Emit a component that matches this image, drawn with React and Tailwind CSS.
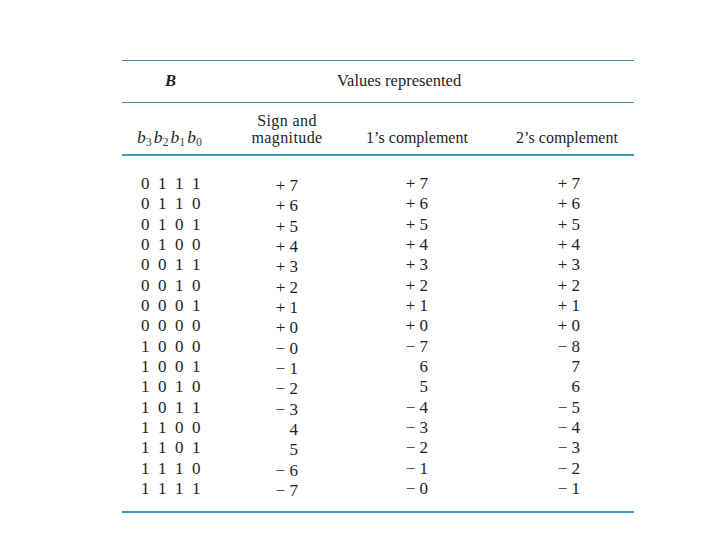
import React from 'react';

// rows: bits, sign-magnitude, 1's complement, 2's complement
const rows = [
    ['0111', '+ 7', '+ 7', '+ 7'],
    ['0110', '+ 6', '+ 6', '+ 6'],
    ['0101', '+ 5', '+ 5', '+ 5'],
    ['0100', '+ 4', '+ 4', '+ 4'],
    ['0011', '+ 3', '+ 3', '+ 3'],
    ['0010', '+ 2', '+ 2', '+ 2'],
    ['0001', '+ 1', '+ 1', '+ 1'],
    ['0000', '+ 0', '+ 0', '+ 0'],
    ['1000', '\u2212 0', '\u2212 7', '\u2212 8'],
    ['1001', '\u2212 1', '6', '7'],
    ['1010', '\u2212 2', '5', '6'],
    ['1011', '\u2212 3', '\u2212 4', '\u2212 5'],
    ['1100', '4', '\u2212 3', '\u2212 4'],
    ['1101', '5', '\u2212 2', '\u2212 3'],
    ['1110', '\u2212 6', '\u2212 1', '\u2212 2'],
    ['1111', '\u2212 7', '\u2212 0', '\u2212 1'],
];

const Bit = ({ sub }) => (
    <span className="mr-[2px]">
        <i className="text-[17.5px]">b</i>
        <sub className="text-[12px] text-[#444]">{sub}</sub>
    </span>
);

const App = () => {
    return (
        <div className="min-h-screen bg-white pt-[60px] font-['Liberation_Serif',serif] text-[#1e1e1e]">
            <div className="ml-[122px] w-[512px]">
                <div className="h-px bg-[#3f93ab]" />

                {/* first header row */}
                <div className="grid h-[41px] grid-cols-[118px_90px_170px_134px] items-center text-[16.5px]">
                    <div className="pl-[43px] font-bold italic">B</div>
                    <div className="col-span-3 pl-[97px]">Values represented</div>
                </div>

                <div className="h-px bg-[#3f93ab]" />

                {/* second header row */}
                <div className="grid h-[51px] grid-cols-[118px_90px_170px_134px] items-end pb-[8px] text-[16px] leading-[17px]">
                    <div className="pl-[15px] whitespace-nowrap">
                        <Bit sub="3" />
                        <Bit sub="2" />
                        <Bit sub="1" />
                        <Bit sub="0" />
                    </div>
                    <div className="pl-[4px] text-center tracking-[0.4px]">Sign and<br />magnitude</div>
                    <div className="pl-[4px] text-center">1’s complement</div>
                    <div className="text-center">2’s complement</div>
                </div>

                <div className="h-[2px] bg-[#389fc2]" />

                {/* body */}
                <div className="pt-[17px] pb-[13px] text-[17px]">
                    {rows.map((r) => (
                        <div key={r[0]} className="grid h-[20.33px] grid-cols-[118px_90px_170px_134px] items-center leading-none">
                            <div className="flex pl-[19px]">
                                {r[0].split('').map((d, k) => (
                                    <span key={k} className="inline-block w-[17px]">{d}</span>
                                ))}
                            </div>
                            <div className="pr-[32px] pt-[4px] text-right whitespace-pre">{r[1]}</div>
                            <div className="pr-[72px] text-right whitespace-pre">{r[2]}</div>
                            <div className="pr-[54px] text-right whitespace-pre">{r[3]}</div>
                        </div>
                    ))}
                </div>

                <div className="h-[2px] bg-[#389fc2]" />
            </div>
        </div>
    );
};

export default App;
